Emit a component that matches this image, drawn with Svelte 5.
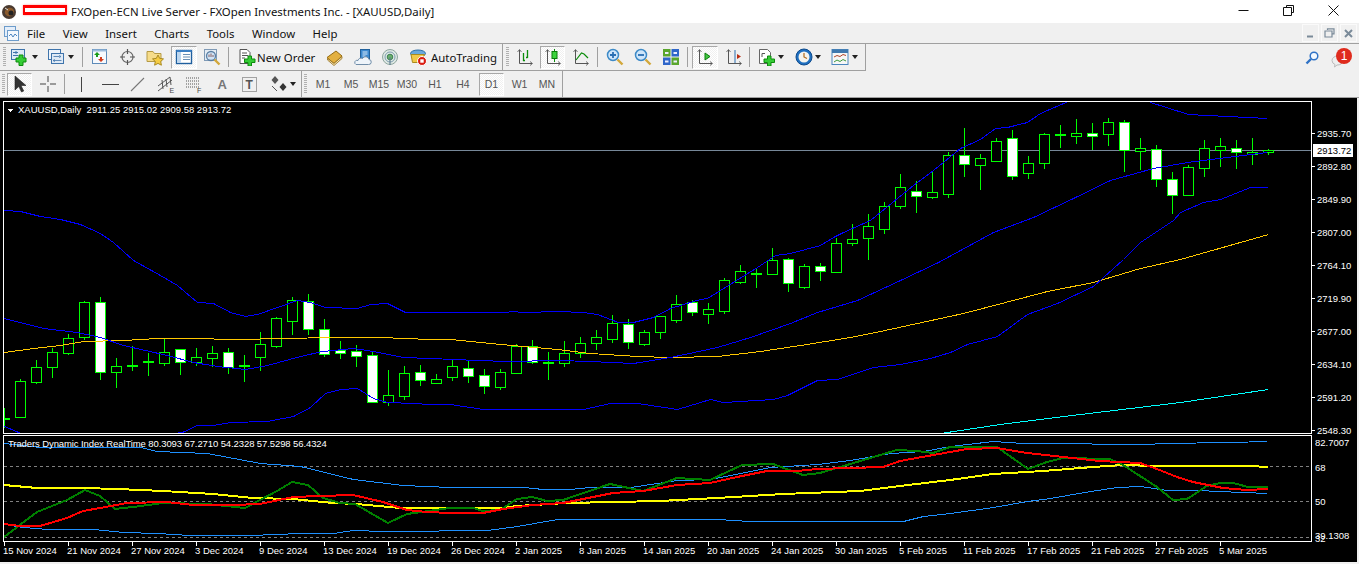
<script>
	// [bodyTop, bodyBottom, wickTop, wickBottom, white]
	const raw = [
		[418,418,408,427,0],[381,417,379,417,0],[367,382,360,383,0],[352,367,348,377,0],[338,353,334,354,0],
		[302,337,301,339,0],[302,372,297,379,1],[366,372,358,387,0],[365,366,346,370,0],[361,362,353,375,0],
		[352,363,339,365,0],[349,362,349,374,1],[357,362,348,365,0],[353,358,346,366,0],[352,367,348,373,1],
		[365,366,355,381,0],[344,357,332,370,0],[318,346,317,347,0],[300,321,297,334,0],[301,329,294,334,1],
		[329,354,319,356,1],[350,353,341,358,1],[351,356,345,366,1],[355,402,351,402,1],[395,402,370,405,0],
		[373,396,366,399,0],[372,380,365,385,1],[379,383,374,383,0],[366,377,360,380,0],[368,376,361,382,1],
		[375,386,369,393,1],[372,387,369,389,0],[346,373,344,373,0],[346,362,340,363,1],[362,362,352,379,0],
		[353,363,341,366,0],[343,353,337,357,0],[337,343,330,349,0],[323,339,315,342,0],[324,342,319,348,1],
		[332,344,330,345,0],[316,332,316,338,0],[304,320,295,322,0],[302,312,300,315,1],[309,314,303,323,0],
		[280,311,278,313,0],[271,282,265,283,0],[273,273,269,287,0],[260,274,248,274,0],[259,283,258,291,1],
		[266,287,264,288,0],[266,271,263,280,1],[243,272,238,272,0],[239,243,224,245,0],[226,238,214,259,0],
		[206,229,202,233,0],[187,206,174,208,0],[191,196,181,212,1],[192,197,171,198,0],[155,194,152,197,0],
		[155,164,128,176,1],[158,165,154,189,0],[141,161,138,161,0],[138,176,130,179,1],[163,173,156,178,0],
		[134,163,133,168,0],[134,135,125,147,0],[133,136,119,143,0],[133,136,123,149,1],[122,134,118,145,0],
		[122,150,120,171,1],[148,151,138,169,0],[149,179,145,186,1],[179,195,172,213,1],[167,195,165,195,0],
		[148,168,140,176,0],[146,150,138,166,0],[148,152,140,168,1],[152,154,138,164,0],[150,152,149,154,0]
	];
	const candles = raw.map((c, i) => ({ x: 4 + i * 16, top: c[0], bot: c[1], hi: c[2], lo: c[3], white: c[4] === 1 }));

	const upper = '4,210 20,211 40,216 60,219 80,224 100,233 113,242 133,260 160,275 177,285 197,302 213,303 230,312 245,316 257,314 297,300 310,302 325,307 357,308 370,304 387,303 405,312 450,312 507,312 510,311 525,312 557,311 583,312 597,314 618,322 633,322 653,317 670,308 683,304 700,299 707,298 720,290 757,267 775,255 790,253 820,245 833,237 843,232 870,220 897,198 913,185 933,170 960,148 980,139 995,128 1007,127 1027,122 1040,113 1070,100 1148,100 1150,102 1188,114 1227,116 1267,118';
	const middle = '4,318 43,328 77,332 100,337 123,345 167,355 193,362 217,366 245,369 267,365 300,356 322,351 353,348 373,351 403,357 430,358 477,360 507,361 557,360 590,361 633,363 670,357 717,347 750,337 790,323 817,312 857,300 900,280 938,262 993,232 1033,217 1073,198 1110,180 1153,168 1187,162 1227,157 1267,152';
	const lower = '4,426 23,434 166,434 182,432 197,425 213,425 230,422 267,421 293,416 310,407 325,393 340,389 357,388 373,398 387,402 413,403 430,404 450,404 483,409 540,409 583,409 610,403 637,403 677,409 710,399 723,402 773,399 787,395 817,380 837,379 873,367 900,364 930,358 950,352 967,344 997,336 1027,314 1057,303 1093,286 1123,259 1140,242 1173,220 1180,212 1203,202 1220,199 1250,187 1267,187';
	const gold = '4,352 33,348 60,345 83,341 123,340 157,338 190,338 237,339 283,338 332,337 380,337 430,339 450,339 490,343 523,346 557,349 590,353 637,356 670,357 717,356 760,351 800,345 850,337 880,331 963,313 1047,291 1093,282 1140,268 1180,259 1268,234';
	const aqua = '940,433 1000,424 1080,414 1180,402 1268,389';

	const tdiUp = '4,443 40,447 140,447 157,451 207,453 260,463 300,466 353,479 403,485 450,487 523,487 543,489 570,489 590,487 630,487 677,480 710,479 740,473 770,467 817,464 850,460 890,453 923,451 950,446 993,441 1023,443 1050,443 1083,443 1100,444 1147,444 1163,443 1230,442 1267,441';
	const tdiLow = '4,524 23,527 47,529 93,529 123,532 157,533 190,535 250,535 300,533 333,533 353,530 383,531 427,531 450,530 487,530 517,526 557,519 603,519 717,519 750,521 780,521 903,521 923,516 950,513 993,507 1027,501 1050,498 1090,491 1117,487 1140,486 1167,490 1200,490 1217,491 1243,492 1267,493';
	const tdiYellow = '4,485 37,488 83,488 117,489 163,491 213,494 253,498 293,499 333,503 357,504 400,508 500,508 517,506 567,503 660,501 717,498 783,494 860,491 900,486 950,480 993,474 1043,471 1093,467 1123,465 1157,466 1250,466 1268,467';
	const tdiRed = '4,524 20,526 40,526 67,518 83,511 100,508 127,503 167,502 193,505 233,505 260,504 293,497 320,496 353,495 383,502 407,510 427,512 450,513 483,513 503,509 533,505 563,503 593,497 613,493 643,491 677,485 710,483 737,477 767,471 797,471 817,469 883,467 900,461 950,452 967,449 997,448 1027,453 1063,457 1100,461 1140,463 1157,469 1177,477 1193,482 1223,488 1247,490 1268,489';
	const tdiGreen = '4,537 37,512 67,500 85,490 100,496 115,509 133,507 163,503 207,504 245,508 277,491 292,482 308,485 323,498 340,503 355,504 388,523 407,514 450,508 473,508 483,511 500,510 517,499 532,497 547,501 563,500 610,484 643,491 677,478 710,480 742,465 773,464 803,475 820,473 867,459 897,450 917,451 933,453 950,447 997,447 1028,469 1047,462 1063,458 1110,459 1123,465 1157,487 1173,500 1187,499 1207,486 1220,483 1233,483 1248,487 1268,487';

	const priceLabels = [
		['2935.70', 133], ['2892.80', 166], ['2849.90', 199], ['2807.00', 232], ['2764.10', 265],
		['2719.90', 298], ['2677.00', 331], ['2634.10', 364], ['2591.20', 397], ['2548.30', 430]
	];
	const dates = ['15 Nov 2024','21 Nov 2024','27 Nov 2024','3 Dec 2024','9 Dec 2024','13 Dec 2024','19 Dec 2024','26 Dec 2024','2 Jan 2025','8 Jan 2025','14 Jan 2025','20 Jan 2025','24 Jan 2025','30 Jan 2025','5 Feb 2025','11 Feb 2025','17 Feb 2025','21 Feb 2025','27 Feb 2025','5 Mar 2025'];

	const axes = '<path d="M3.5 2v13.5H16" fill="none" stroke="#555"/><path d="M1.5 4l2-2.5 2 2.5M14 13.5l2.5 2-2.5 2" fill="none" stroke="#555" stroke-width=".8"/>';
	const icons = {
		newChart: '<rect x="1.5" y="1.5" width="13" height="10" fill="#dfeaf6" stroke="#3f74ab"/><path d="M3 4.5h5M3 7.5h5M6 3v3" stroke="#3f74ab"/><path d="M9 7h4v3h3v4h-3v3.5H9V14H6v-4h3z" fill="#35cc35" stroke="#0d8a0d"/>',
		profiles: '<rect x="1.5" y="1.5" width="12" height="10" fill="#eef4fb" stroke="#3f74ab"/><rect x="4.5" y="5.5" width="12" height="10" fill="#dfeaf6" stroke="#3f74ab"/><path d="M6.5 8.5h6M6.5 12.5h8M12 7.5l2 1-2 1M8 11.5l-2 1 2 1" fill="none" stroke="#3f74ab" stroke-width=".8"/>',
		market: '<rect x="1.5" y="1.5" width="14" height="14" fill="#f6f9fd" stroke="#5d8bb9"/><path d="M1.5 1.5h14v2h-14z" fill="#9dbcdc"/><path d="M6 4l3 3H7v2H5V7H3z" fill="#1a9c1a"/><path d="M10 14l-3-3h2V9h2v2h2z" fill="#d33c1c"/>',
		navigator: '<circle cx="8.5" cy="9" r="5.5" fill="none" stroke="#666" stroke-width="1.2"/><path d="M8.5 1v5M8.5 12v5M1 9h5M11 9h5" stroke="#555" stroke-width="1.2"/>',
		folder: '<path d="M1 3.5h6l1.5 2H15v8H1z" fill="#f6dc8a" stroke="#b59a45"/><path d="M12 7l1.7 3.4 3.8.5-2.8 2.6.7 3.7-3.4-1.8-3.4 1.8.7-3.7-2.8-2.6 3.8-.5z" fill="#f5cc43" stroke="#a98a23"/>',
		data: '<rect x="1.5" y="2.5" width="15" height="13" fill="#fff" stroke="#1f5f9e" stroke-width="1.4"/><path d="M1.5 3h15" stroke="#3b7fc4" stroke-width="2"/><rect x="2" y="4" width="4" height="11" fill="#bcd6ef"/><path d="M8 6.5h7M8 9h7M8 11.5h7" stroke="#6b90b5"/>',
		tester: '<rect x="1.5" y="1.5" width="12" height="11" fill="#e4ecf4" stroke="#7f9ab6"/><circle cx="8" cy="8" r="4.5" fill="#cfe3f6" stroke="#5b7fa3" stroke-width="1.3"/><path d="M6 9V6.5M8 9V5.5M10 9V7" stroke="#8a5f5f"/><path d="M11.5 11.5l5 5" stroke="#d3a83b" stroke-width="2.4"/>',
		order: '<path d="M2 1.5h7l3 3v11H2z" fill="#fff" stroke="#555"/><path d="M4 5h5M4 7.5h6M4 10h3" stroke="#555"/><path d="M10 8h3.5v3H17v3.5h-3.5V18H10v-3.5H6.5V11H10z" fill="#35cc35" stroke="#0d8a0d"/>',
		book: '<path d="M1 9.5 10 3l6 5-8 7.5z" fill="#e3b040" stroke="#946b12"/><path d="M1.5 10.5 8 15.500l8-7v2l-8 7-6.500-5.500z" fill="#f6e9bc" stroke="#946b12" stroke-width=".8"/>',
		cloud: '<rect x="6.5" y="1.5" width="9" height="9" fill="#3d8ad0" stroke="#21619c"/><path d="M8.5 4h5M8.5 6h5M8.5 8h3" stroke="#dcebf9"/><path d="M2 16.5h12.5a2.5 2.5 0 0 0 .5-5 3.5 3.5 0 0 0-6.5-1A3 3 0 0 0 4 12.5 2.2 2.2 0 0 0 2 16.5z" fill="#eef4fa" stroke="#6f8ca8"/>',
		signal: '<circle cx="9" cy="9" r="7.5" fill="#dfe9e4" stroke="#8fa7a0"/><circle cx="9" cy="9" r="5" fill="none" stroke="#7f9eb0"/><circle cx="9" cy="9" r="2.8" fill="#68b06a" stroke="#3f7f55"/><path d="M9 9v8" stroke="#5f7f8f" stroke-width="1.2"/>',
		auto: '<ellipse cx="9" cy="5.5" rx="7.5" ry="3.5" fill="#6aa9dc" stroke="#2e6fa6"/><path d="M2 6.5l1.5 8h8l4-8z" fill="#f1c948" stroke="#a98b1f"/><circle cx="13" cy="13" r="4.5" fill="#d91d12" stroke="#fff"/><rect x="11.3" y="11.3" width="3.4" height="3.4" fill="#fff"/>',
		bars: axes + '<path d="M7.5 5v8M7 12.5h2M11.5 2v8M10 9.5h1.5" fill="none" stroke="#0a8c0a" stroke-width="1.3"/>',
		candle: axes + '<path d="M10.5 1v13" stroke="#0a8c0a"/><rect x="8" y="3.5" width="5" height="7" fill="#3cd33c" stroke="#0a7c0a"/>',
		line: axes + '<path d="M4 12l5.5-7L12 6l4 4" fill="none" stroke="#0a8c0a" stroke-width="1.2"/>',
		zoomIn: '<circle cx="7" cy="7" r="5.5" fill="#cfe6fa" stroke="#3d8ac7" stroke-width="1.5"/><path d="M4 7h6M7 4v6" stroke="#2a6fb3" stroke-width="1.8"/><path d="M11.5 11.5l5 5" stroke="#d3a83b" stroke-width="2.4"/>',
		zoomOut: '<circle cx="7" cy="7" r="5.5" fill="#cfe6fa" stroke="#3d8ac7" stroke-width="1.5"/><path d="M4 7h6" stroke="#2a6fb3" stroke-width="1.8"/><path d="M11.5 11.5l5 5" stroke="#d3a83b" stroke-width="2.4"/>',
		tile: '<rect x="1" y="1" width="7.5" height="7.5" fill="#5aa62d"/><rect x="9.5" y="1" width="7.5" height="7.5" fill="#2f66c9"/><rect x="1" y="9.5" width="7.5" height="7.5" fill="#2f66c9"/><rect x="9.5" y="9.5" width="7.5" height="7.5" fill="#5aa62d"/><path d="M3 4h3.5v2H3zM11.5 4H15v2h-3.5zM3 12.5h3.5v2H3zM11.5 12.5H15v2h-3.5z" fill="#eef"/>',
		scroll: axes + '<path d="M9 5l5 3.5L9 12z" fill="#42c742" stroke="#0a7c0a"/>',
		shift: axes + '<path d="M10 2v13" stroke="#2b6fb0"/><path d="M16 8.5l-4-2.5v5z" fill="#b82d12"/>',
		indicators: '<path d="M1.5 1.5h8l3 3v11h-11z" fill="#fff" stroke="#666"/><path d="M4 9V5.5h3" fill="none" stroke="#555"/><path d="M9.5 8H13v3h3.500v3.500H13V18H9.500v-3.500H6V11h3.500z" fill="#35cc35" stroke="#0d8a0d"/>',
		clock: '<circle cx="9" cy="9" r="8" fill="#1e6fc0" stroke="#0d4a8c"/><circle cx="9" cy="9" r="5.5" fill="#f4f4ee"/><path d="M9 5v4l3 1.5" fill="none" stroke="#b06a1c" stroke-width="1.2"/>',
		template: '<rect x="1" y="1.5" width="16" height="15" fill="#f7f7f7" stroke="#4a86bd"/><rect x="1" y="1.5" width="16" height="3.5" fill="#3f78ae"/><path d="M3 9l3-1.500 3 1 3-2 3 1" fill="none" stroke="#b0452a"/><path d="M3 14l3-2 3 1.500 3-2 3 1.500" fill="none" stroke="#3c9a3c"/>',
		cursor: '<path d="M4 1v14l3.800-3.500 2.700 5.500 2.200-1-2.700-5.500H15z" fill="#333" stroke="#222" stroke-width=".6"/>',
		cross: '<path d="M9 1v6M9 11v6M1 9h6M11 9h6" stroke="#444"/>',
		vline: '<path d="M9.500 2v15" stroke="#444"/>',
		hline: '<path d="M1 9.500h17" stroke="#444"/>',
		diag: '<path d="M2 16 15 3" stroke="#777" stroke-width="1.1"/>',
		channel: '<path d="M1 11 13 2M1 16 15 5M5 5l1 9M9 4l1 8M13 2l1 8" fill="none" stroke="#555"/><text x="12.5" y="17.5" font-size="7" fill="#444" font-family="Liberation Sans">E</text>',
		fib: '<path d="M1 3h13M1 6h13M1 9h13M1 12h13" stroke="#555" stroke-dasharray="1 1"/><text x="12" y="17.5" font-size="7" fill="#444" font-family="Liberation Sans">F</text>',
		letter: '<text x="4.5" y="14" font-size="13" font-weight="bold" fill="#777" font-family="Liberation Sans">A</text>',
		label: '<rect x="1.5" y="2.5" width="14" height="14" fill="none" stroke="#555" stroke-dasharray="1 1"/><text x="4.5" y="14" font-size="12" font-weight="bold" fill="#555" font-family="Liberation Sans">T</text>',
		arrows: '<path d="M5 1l3.500 4-3.500 4-3.500-4z" fill="#555"/><path d="M13 8l3.500 4-3.500 4-3.500-4z" fill="#333"/><path d="M2 11l5 5" stroke="#555"/>'
	};

	const row1 = [
		{ type: 'grip', w: 8 },
		{ icon: 'newChart', w: 21 }, { type: 'arrow', w: 11 },
		{ icon: 'profiles', w: 21, ml: 5 }, { type: 'arrow', w: 10 }, { type: 'sep', w: 12 },
		{ icon: 'market', w: 23 }, { icon: 'navigator', w: 33 }, { icon: 'folder', w: 22 },
		{ icon: 'data', w: 26, ml: 5, pressed: true }, { icon: 'tester', w: 30 }, { type: 'sep', w: 3 },
		{ icon: 'order', w: 21, ml: 6 }, { text: 'New Order', w: 61 },
		{ icon: 'book', w: 33 }, { icon: 'cloud', w: 24 }, { icon: 'signal', w: 30 }, { icon: 'auto', w: 26 },
		{ text: 'AutoTrading', w: 69 }, { type: 'border', w: 3 },
		{ type: 'grip', w: 9 },
		{ icon: 'bars', w: 26 }, { icon: 'candle', w: 25, ml: 2, pressed: true }, { icon: 'line', w: 32 }, { type: 'sep', w: 1 },
		{ icon: 'zoomIn', w: 33 }, { icon: 'zoomOut', w: 23 }, { icon: 'tile', w: 33 }, { type: 'sep', w: 1 },
		{ icon: 'scroll', w: 26, ml: 4, pressed: true }, { icon: 'shift', w: 31 }, { type: 'sep', w: 1 },
		{ icon: 'indicators', w: 18, ml: 8 }, { type: 'arrow', w: 10 },
		{ icon: 'clock', w: 17, ml: 9 }, { type: 'arrow', w: 12 },
		{ icon: 'template', w: 16, ml: 8 }, { type: 'arrow', w: 14 }
	];
	const row2 = [
		{ type: 'grip', w: 7 },
		{ icon: 'cursor', w: 25, pressed: true }, { icon: 'cross', w: 31 }, { type: 'sep', w: 2 },
		{ icon: 'vline', w: 32 }, { icon: 'hline', w: 26 }, { icon: 'diag', w: 29 }, { icon: 'channel', w: 28 },
		{ icon: 'fib', w: 28 }, { icon: 'letter', w: 27 }, { icon: 'label', w: 29 },
		{ icon: 'arrows', w: 18, ml: 6 }, { type: 'arrow', w: 9 }, { type: 'border', w: 5 },
		{ type: 'grip', w: 7 }
	];
	const periods = [
		{ name: 'M1', w: 28 }, { name: 'M5', w: 28 }, { name: 'M15', w: 28 }, { name: 'M30', w: 28 }, { name: 'H1', w: 28 }, { name: 'H4', w: 28 },
		{ name: 'D1', w: 25, ml: 2, pressed: true }, { name: 'W1', w: 29, ml: 1 }, { name: 'MN', w: 26 }
	];
	const menu = ['File', 'View', 'Insert', 'Charts', 'Tools', 'Window', 'Help'];
</script>

{#snippet item(it)}
	{#if it.type === 'grip'}
		<span class="cell" style="width:{it.w}px"><i class="grip"></i></span>
	{:else if it.type === 'sep'}
		<span class="cell" style="width:{it.w}px"><i class="sep"></i></span>
	{:else if it.type === 'border'}
		<span class="cell end" style="width:{it.w}px"></span>
	{:else if it.type === 'arrow'}
		<span class="cell" style="width:{it.w}px"><i class="arrow"></i></span>
	{:else if it.text}
		<span class="cell label" style="width:{it.w}px">{it.text}</span>
	{:else}
		<span class="cell" class:pressed={it.pressed} style="width:{it.w}px;margin-left:{it.ml || 0}px">
			<svg class="tool" viewBox="0 0 18 18">{@html icons[it.icon]}</svg>
		</span>
	{/if}
{/snippet}

<div class="window">
	<header class="titlebar">
		<svg class="logo" viewBox="0 0 14 14">
			<circle cx="7" cy="7" r="7" fill="#4a3a30" />
			<path d="M3 6c2-4 6-4 8-2s1 6-2 7-7-1-6-5z" fill="#8a5a2c" />
			<circle cx="9" cy="8" r="2.5" fill="#222" />
			<path d="M3 3l3 2" stroke="#ddd" />
		</svg>
		<span class="redact"></span>
		<span class="title">FXOpen-ECN Live Server - FXOpen Investments Inc. - [XAUUSD,Daily]</span>
		<div class="winctl">
			<span class="winbtn"><svg width="11" height="11" viewBox="0 0 11 11"><path d="M.5 5.500h10" stroke="#111" /></svg></span>
			<span class="winbtn"><svg width="11" height="11" viewBox="0 0 11 11"><path d="M3.500 2.500v-2h7v7h-2M.5 2.500h8v8h-8z" fill="none" stroke="#111" /></svg></span>
			<span class="winbtn"><svg width="11" height="11" viewBox="0 0 11 11"><path d="M.5.5l10 10M10.500.5l-10 10" stroke="#111" /></svg></span>
		</div>
	</header>

	<nav class="menubar">
		<svg class="menuicon" viewBox="0 0 15 15">
			<rect x=".5" y=".5" width="11" height="10" fill="#e4eefa" stroke="#6d9ccb" />
			<rect x="3.5" y="4.5" width="11" height="10" fill="#f4f8fd" stroke="#6d9ccb" />
			<path d="M5 10l2-2 2 3 2-3 2 2" fill="none" stroke="#4a84c0" />
		</svg>
		<div class="menuitems">
			{#each menu as m}<span>{m}</span>{/each}
		</div>
		<div class="mdi">
			<span class="mdibtn"><svg width="9" height="9" viewBox="0 0 9 9"><path d="M1 7.5h6" stroke="#7a8a99" stroke-width="2" /></svg></span>
			<span class="mdibtn"><svg width="11" height="11" viewBox="0 0 11 11"><path d="M3.5 2V.8H10v5H8.500M1 3h7v6H1z" fill="none" stroke="#7a8a99" stroke-width="1.2" /></svg></span>
			<span class="mdibtn"><svg width="9" height="9" viewBox="0 0 9 9"><path d="M1 1l7 7M8 1 1 8" stroke="#7a8a99" stroke-width="2" /></svg></span>
		</div>
	</nav>

	<div class="toolbar">
		<div class="group row1">
			{#each row1 as it}{@render item(it)}{/each}
		</div>
		<div class="status">
			<svg class="search" viewBox="0 0 14 14">
				<circle cx="9" cy="5" r="3.8" fill="#f4f9ff" stroke="#2f72c6" stroke-width="1.5" />
				<path d="M6 8l-4.500 4.500" stroke="#2f72c6" stroke-width="2.4" />
			</svg>
			<span class="bubble">
				<svg width="14" height="14" viewBox="0 0 14 14">
					<path d="M1 6.500a5.500 4.500 0 1 1 5 4.500l-2.500 2 .5-2.500a4.500 4.500 0 0 1-3-4z" fill="#eee" stroke="#bbb" />
				</svg>
				<span class="badge">1</span>
			</span>
		</div>
	</div>

	<div class="toolbar second">
		<div class="group row2">
			{#each row2 as it}{@render item(it)}{/each}
			{#each periods as p}
				<span class="cell period" class:pressed={p.pressed} style="width:{p.w}px;margin-left:{p.ml || 0}px">{p.name}</span>
			{/each}
		</div>
	</div>

	<div class="chart">
		<svg class="plot" viewBox="0 98 1357 464" width="1357" height="464" shape-rendering="crispEdges">
			<defs>
				<clipPath id="mainclip"><rect x="4" y="102" width="1307" height="331" /></clipPath>
				<clipPath id="subclip"><rect x="4" y="436" width="1307" height="105" /></clipPath>
			</defs>

			<g clip-path="url(#mainclip)" fill="none">
				<line x1="4" x2="1311" y1="150.5" y2="150.5" stroke="#778899" />
				{#each candles as c}
					<line x1={c.x + 0.5} x2={c.x + 0.5} y1={c.hi} y2={c.lo + 1} stroke="#00ff00" />
					<rect x={c.x - 4.5} y={c.top + 0.5} width="10" height={Math.max(c.bot - c.top, 1)} fill={c.white ? '#fff' : '#000'} stroke="#00ff00" />
				{/each}
				<g transform="translate(.5 .5)">
					<polyline points={aqua} stroke="#00ffff" />
					<polyline points={gold} stroke="#ffc800" />
					<polyline points={upper} stroke="#0000ff" />
					<polyline points={middle} stroke="#0000ff" />
					<polyline points={lower} stroke="#0000ff" />
				</g>
			</g>

			<g clip-path="url(#subclip)" fill="none">
				{#each [466, 501, 537] as y}
					<line x1="4" x2="1311" y1={y + 0.5} y2={y + 0.5} stroke="#808080" stroke-dasharray="3 3" />
				{/each}
				<g transform="translate(.5 .5)">
					<polyline points={tdiUp} stroke="#1e90ff" />
					<polyline points={tdiLow} stroke="#1e90ff" />
				</g>
				<polyline points={tdiYellow} stroke="#ffff00" stroke-width="2" />
				<polyline points={tdiGreen} stroke="#008000" stroke-width="2" />
				<polyline points={tdiRed} stroke="#ff0000" stroke-width="2" />
			</g>

			<rect x="3.5" y="101.5" width="1308" height="332" fill="none" stroke="#fff" />
			<rect x="3.5" y="435.5" width="1308" height="106" fill="none" stroke="#fff" />

			<path d="M7 108.5h7l-3.500 3.500z" fill="#fff" />
			<text class="t" x="18" y="113">XAUUSD,Daily  2911.25 2915.02 2909.58 2913.72</text>
			<text class="t tight" x="8" y="447">Traders Dynamic Index RealTime 80.3093 67.2710 54.2328 57.5298 56.4324</text>

			{#each priceLabels as [label, y]}
				<line x1="1312" x2="1315" y1={y + 0.5} y2={y + 0.5} stroke="#fff" />
				<text class="t" x="1317" y={y + 4}>{label}</text>
			{/each}
			<rect x="1313" y="144" width="40" height="13" fill="#fff" />
			<text class="t dark" x="1317" y="154">2913.72</text>

			<text class="t" x="1315" y="446">82.7007</text>
			<text class="t" x="1315" y="471">68</text>
			<text class="t" x="1315" y="505">50</text>
			<text class="t" x="1315" y="542">32</text>
			<text class="t" x="1315" y="539">39.1308</text>

			{#each dates as d, i}
				<line x1={4.5 + i * 64} x2={4.5 + i * 64} y1="542" y2="546" stroke="#fff" />
				<text class="t" x={3 + i * 64} y="554">{d}</text>
			{/each}
		</svg>
	</div>
</div>

<style>
	:global(body) {
		margin: 0;
		background: #f0f0f0;
		overflow: hidden;
	}

	.window {
		width: 1359px;
		height: 564px;
		display: flex;
		flex-direction: column;
		overflow: hidden;
		font-family: "Noto Sans", "Open Sans", sans-serif;
		font-size: 11.4px;
		color: #111;
	}

	.titlebar {
		height: 23px;
		background: #fff;
		display: flex;
		align-items: center;
		padding-left: 2px;
		box-sizing: border-box;
	}

	.logo {
		width: 14px;
		height: 14px;
	}

	.redact {
		width: 44px;
		height: 10px;
		margin: 0 4px 4px 7px;
		box-sizing: border-box;
		border: solid #f00;
		border-width: 3px 2px;
		background: #fff;
		box-shadow: 0 0 2px #f99;
	}

	.title {
		white-space: nowrap;
	}

	.winctl {
		margin-left: auto;
		display: flex;
		padding-right: 3px;
	}

	.winbtn {
		width: 45px;
		height: 23px;
		padding-bottom: 3px;
		box-sizing: border-box;
		display: flex;
		align-items: center;
		justify-content: center;
	}

	.menubar {
		height: 21px;
		box-sizing: border-box;
		border-bottom: 1px solid #a0a0a0;
		display: flex;
		align-items: center;
		padding-left: 4px;
		background: #f0f0f0;
	}

	.menuicon {
		width: 15px;
		height: 15px;
	}

	.menuitems {
		display: flex;
		gap: 17.5px;
		margin-left: 8px;
	}

	.mdi {
		margin-left: auto;
		display: flex;
		gap: 2px;
		padding-right: 2px;
		align-self: flex-start;
		margin-top: 1px;
	}

	.mdibtn {
		width: 17px;
		height: 18px;
		box-sizing: border-box;
		border: 1px solid #fafafa;
		display: flex;
		align-items: center;
		justify-content: center;
	}

	.toolbar {
		height: 27px;
		display: flex;
		box-sizing: border-box;
	}

	.second {
		border-bottom: 1px solid #a0a0a0;
	}

	.group {
		display: flex;
		align-items: center;
		box-sizing: border-box;
	}

	.row1 {
		width: 866px;
		border-right: 1px solid #a0a0a0;
		border-bottom: 1px solid #a0a0a0;
	}

	.row2 {
		width: 563px;
		border-right: 1px solid #a0a0a0;
	}

	.cell {
		flex: none;
		height: 100%;
		display: flex;
		align-items: center;
		justify-content: center;
		box-sizing: border-box;
	}

	.cell.end {
		border-right: 1px solid #a0a0a0;
	}

	.label {
		justify-content: flex-start;
		white-space: nowrap;
	}

	.period {
		font-family: "Liberation Sans", sans-serif;
		font-size: 10.5px;
		color: #555;
	}

	.pressed {
		height: 23px;
		border: 1px solid;
		border-color: #a8a8a8 #fff #fff #a8a8a8;
		background: repeating-conic-gradient(#fff 0 25%, #f0f0f0 0 50%) 0 0 / 2px 2px;
	}

	.tool {
		width: 18px;
		height: 18px;
		flex: none;
	}

	.grip {
		width: 3px;
		height: 20px;
		background: repeating-linear-gradient(#b0b0b0 0 1px, #f0f0f0 1px 2px);
	}

	.sep {
		width: 1px;
		height: 20px;
		background: #a0a0a0;
	}

	.arrow {
		width: 0;
		height: 0;
		border: 3.5px solid transparent;
		border-top: 4px solid #222;
		border-bottom: 0;
	}

	.status {
		margin-left: auto;
		display: flex;
		align-items: flex-start;
		padding: 7px 6px 0 0;
		gap: 12px;
	}

	.search {
		width: 14px;
		height: 14px;
	}

	.bubble {
		position: relative;
		width: 22px;
		height: 20px;
		display: block;
		padding-top: 3px;
		box-sizing: border-box;
	}

	.badge {
		position: absolute;
		left: 5px;
		top: -3px;
		width: 16px;
		height: 16px;
		border-radius: 50%;
		background: #df2b1d;
		color: #fff;
		font-size: 12px;
		font-family: "Liberation Sans", sans-serif;
		text-align: center;
		line-height: 16px;
	}

	.chart {
		width: 1357px;
		height: 464px;
		background: #000;
	}

	.plot {
		display: block;
	}

	.t {
		font-family: "Liberation Sans", sans-serif;
		font-size: 9.5px;
		fill: #fff;
		white-space: pre;
		shape-rendering: auto;
	}

	.t.tight {
		letter-spacing: -0.1px;
	}

	.t.dark {
		fill: #000;
	}
</style>
